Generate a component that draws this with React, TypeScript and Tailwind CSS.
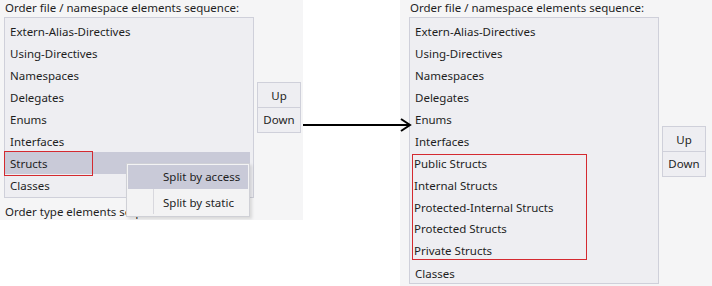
import React from "react";

const LEFT_ITEMS = [
  "Extern-Alias-Directives",
  "Using-Directives",
  "Namespaces",
  "Delegates",
  "Enums",
  "Interfaces",
  "Structs",
  "Classes",
];

const RIGHT_TOP = ["Extern-Alias-Directives", "Using-Directives", "Namespaces", "Delegates", "Enums", "Interfaces"];
const RIGHT_STRUCTS = ["Public Structs", "Internal Structs", "Protected-Internal Structs", "Protected Structs", "Private Structs"];

const font = { fontFamily: '"Noto Sans", "Open Sans", sans-serif' };

function Row({ label, selected = false }: { label: string; selected?: boolean }) {
  return (
    <div
      className={[
        "h-[22px] leading-[23px] pl-[5px] mr-[3px] whitespace-nowrap",
        selected ? "bg-[#c9cad8]" : "",
      ].join(" ")}
    >
      {label}
    </div>
  );
}

function UpDown() {
  return (
    <div className="flex flex-col w-[44px] text-center">
      <div className="h-[26px] leading-[25px] bg-[#eeeef2] border border-[#cfd0da]">Up</div>
      <div className="h-[25px] leading-[23px] bg-[#eeeef2] border border-t-0 border-[#cfd0da]">Down</div>
    </div>
  );
}

export default function App() {
  return (
    <div className="relative w-[712px] h-[286px] bg-white text-[11.5px] text-[#1e1e1e]" style={font}>
      <div className="flex items-start h-full">
        {/* before */}
        <div className="relative w-[303px] h-[220px] bg-[#f5f5f6] overflow-hidden">
          <div className="pl-[5px] h-[17px] leading-[16px]">Order file / namespace elements sequence:</div>
          <div className="flex items-start">
            <div className="relative ml-[4px] w-[250px] h-[181px] pt-[2px] bg-[#eeeef2] border border-[#cfd0da]">
              {LEFT_ITEMS.map((it) => (
                <Row key={it} label={it} selected={it === "Structs"} />
              ))}
              <div className="absolute left-[-1px] top-[133px] w-[89px] h-[25px] border-[1.5px] border-[#d42a30]" />
            </div>
            <div className="ml-[3px] mt-[65px]">
              <UpDown />
            </div>
          </div>
          <div className="pl-[5px] mt-[6px] leading-[16px]">Order type elements sequence:</div>

          {/* context menu */}
          <div className="absolute left-[126px] top-[163px] w-[124px] h-[54px] bg-[#f3f3f4] border border-[#cfd0d6] shadow-[2px_2px_3px_rgba(0,0,0,0.12)] p-[1px]">
            <div className="absolute left-[26px] top-[2px] bottom-[2px] w-px bg-[#d8d8de]" />
            <div className="relative h-[24px] leading-[23px] pl-[35px] bg-[#c9cad8]">Split by access</div>
            <div className="relative h-[26px] leading-[27px] pl-[35px]">Split by static</div>
          </div>
        </div>

        {/* arrow gap */}
        <div className="w-[97px]" />

        {/* after */}
        <div className="w-[312px] h-[286px] bg-[#f5f5f6] overflow-hidden">
          <div className="pl-[10px] h-[17px] leading-[16px]">Order file / namespace elements sequence:</div>
          <div className="flex items-start">
            <div className="relative ml-[9px] w-[250px] h-[267px] pt-[2px] bg-[#eeeef2] border border-[#cfd0da]">
              {RIGHT_TOP.map((it) => (
                <Row key={it} label={it} />
              ))}
              <div className="mx-[2px] mt-[2px] mb-[2px] h-[106px] border-[1.5px] border-[#d42a30] w-[175px]">
                {RIGHT_STRUCTS.map((it) => (
                  <div key={it} className="h-[21.75px] leading-[18px] pl-[1px] whitespace-nowrap">
                    {it}
                  </div>
                ))}
              </div>
              <Row label="Classes" />
            </div>
            <div className="ml-[3px] mt-[109px]">
              <UpDown />
            </div>
          </div>
        </div>
      </div>

      <svg className="absolute left-[303px] top-[118px]" width="110" height="14" viewBox="0 0 110 14">
        <line x1="0" y1="7" x2="107" y2="7" stroke="#000" strokeWidth="2" />
        <path d="M98 1 L107 7 L98 13" fill="none" stroke="#000" strokeWidth="2" />
      </svg>
    </div>
  );
}
